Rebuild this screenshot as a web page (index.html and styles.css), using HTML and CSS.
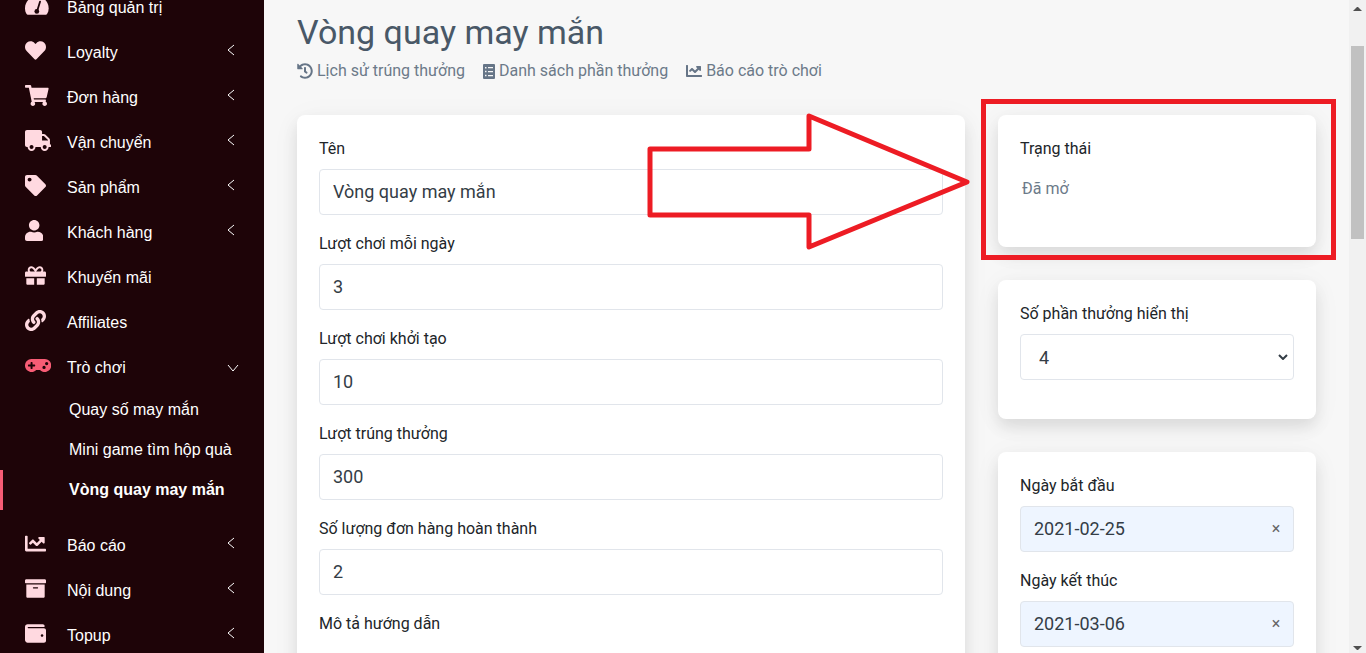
FILE: index.html
```html
<!DOCTYPE html>
<html lang="vi">
<head>
    <meta charset="UTF-8">
    <meta name="viewport" content="width=device-width, initial-scale=1.0">
    <title>Vòng quay may mắn</title>
    <link rel="stylesheet" href="styles.css">
</head>
<body>
    <nav class="sidebar">
        <ul class="menu">
            <li>
                <a href="#">
                    <svg class="icon" viewBox="0 0 576 512"><path d="M288 32C129 32 0 161 0 320c0 53 14 102 39 145 6 10 16 15 28 15h442c12 0 22-5 28-15 25-43 39-92 39-145 0-159-129-288-288-288z"/><path class="needle" d="M368 160L304 368"/><circle class="hub" cx="288" cy="400" r="58"/></svg>
                    <span>Bảng quản trị</span>
                </a>
            </li>
            <li>
                <a href="#">
                    <svg class="icon" viewBox="0 0 512 512"><path d="M462.3 62.6C407.5 15.9 326 24.3 275.7 76.2L256 96.5l-19.7-20.3C186.1 24.3 104.5 15.9 49.7 62.6c-62.8 53.6-66.1 149.8-9.9 207.9l193.5 199.8c12.5 12.9 32.8 12.9 45.3 0l193.5-199.8c56.3-58.1 53-154.3-9.8-207.9z"/></svg>
                    <span>Loyalty</span>
                    <svg class="arrow" viewBox="0 0 8 12"><path d="M7 1L1 6l6 5"/></svg>
                </a>
            </li>
            <li>
                <a href="#">
                    <svg class="icon" viewBox="0 0 576 512"><path d="M528.12 301.319l47.273-208C578.806 78.301 567.391 64 551.99 64H159.208l-9.166-44.81C147.758 8.021 137.93 0 126.529 0H24C10.745 0 0 10.745 0 24v16c0 13.255 10.745 24 24 24h69.883l70.248 343.435C147.325 417.1 136 435.222 136 456c0 30.928 25.072 56 56 56s56-25.072 56-56c0-15.674-6.447-29.835-16.824-40h209.647C430.447 426.165 424 440.326 424 456c0 30.928 25.072 56 56 56s56-25.072 56-56c0-22.172-12.888-41.332-31.579-50.405l5.517-24.276c3.413-15.018-8.002-29.319-23.403-29.319H218.117l-6.545-32h293.145c11.206 0 20.92-7.754 23.403-18.681z"/></svg>
                    <span>Đơn hàng</span>
                    <svg class="arrow" viewBox="0 0 8 12"><path d="M7 1L1 6l6 5"/></svg>
                </a>
            </li>
            <li>
                <a href="#">
                    <svg class="icon" viewBox="0 0 640 512"><path d="M624 352h-16V243.9c0-12.7-5.1-24.9-14.1-33.9L494 110.1c-9-9-21.2-14.1-33.9-14.1H416V48c0-26.5-21.5-48-48-48H48C21.5 0 0 21.5 0 48v320c0 26.5 21.5 48 48 48h16c0 53 43 96 96 96s96-43 96-96h128c0 53 43 96 96 96s96-43 96-96h48c8.8 0 16-7.2 16-16v-32c0-8.8-7.2-16-16-16zM160 464c-26.5 0-48-21.5-48-48s21.5-48 48-48 48 21.5 48 48-21.5 48-48 48zm320 0c-26.5 0-48-21.5-48-48s21.5-48 48-48 48 21.5 48 48-21.5 48-48 48zm80-208H416V144h44.1l99.9 99.9V256z"/></svg>
                    <span>Vận chuyển</span>
                    <svg class="arrow" viewBox="0 0 8 12"><path d="M7 1L1 6l6 5"/></svg>
                </a>
            </li>
            <li>
                <a href="#">
                    <svg class="icon" viewBox="0 0 512 512"><path d="M0 252.118V48C0 21.49 21.49 0 48 0h204.118a48 48 0 0 1 33.941 14.059l211.882 211.882c18.745 18.745 18.745 49.137 0 67.882L293.823 497.941c-18.745 18.745-49.137 18.745-67.882 0L14.059 286.059A48 48 0 0 1 0 252.118zM112 64c-26.51 0-48 21.49-48 48s21.49 48 48 48 48-21.49 48-48-21.49-48-48-48z"/></svg>
                    <span>Sản phẩm</span>
                    <svg class="arrow" viewBox="0 0 8 12"><path d="M7 1L1 6l6 5"/></svg>
                </a>
            </li>
            <li>
                <a href="#">
                    <svg class="icon" viewBox="0 0 448 512"><path d="M224 256c70.7 0 128-57.3 128-128S294.7 0 224 0 96 57.3 96 128s57.3 128 128 128zm89.6 32h-16.7c-22.2 10.2-46.9 16-72.9 16s-50.6-5.8-72.9-16h-16.7C60.2 288 0 348.2 0 422.4V464c0 26.5 21.5 48 48 48h352c26.5 0 48-21.5 48-48v-41.6c0-74.2-60.2-134.4-134.4-134.4z"/></svg>
                    <span>Khách hàng</span>
                    <svg class="arrow" viewBox="0 0 8 12"><path d="M7 1L1 6l6 5"/></svg>
                </a>
            </li>
            <li>
                <a href="#">
                    <svg class="icon" viewBox="0 0 512 512"><path d="M32 448c0 17.7 14.3 32 32 32h160V320H32v128zm256 32h160c17.7 0 32-14.3 32-32V320H288v160zm192-320h-42.1c6.2-12.1 10.1-25.5 10.1-40 0-48.5-39.5-88-88-88-41.6 0-68.5 21.3-103 68.3-34.5-47-61.4-68.3-103-68.3-48.5 0-88 39.5-88 88 0 14.5 3.8 27.9 10.1 40H32c-17.7 0-32 14.3-32 32v80c0 8.8 7.2 16 16 16h480c8.8 0 16-7.2 16-16v-80c0-17.7-14.3-32-32-32zm-326.1 0c-22.1 0-40-17.9-40-40s17.9-40 40-40c19.9 0 34.6 3.3 86.1 80h-86.1zm206.1 0h-86.1c51.4-76.5 65.7-80 86.1-80 22.1 0 40 17.9 40 40s-17.9 40-40 40z"/></svg>
                    <span>Khuyến mãi</span>
                </a>
            </li>
            <li>
                <a href="#">
                    <svg class="icon" viewBox="0 0 512 512"><path d="M326.612 185.391c59.747 59.809 58.927 155.698.36 214.59-.11.12-.24.25-.36.37l-67.2 67.2c-59.27 59.27-155.699 59.262-214.96 0-59.27-59.26-59.27-155.7 0-214.96l37.106-37.106c9.84-9.84 26.786-3.3 27.294 10.606.648 17.722 3.826 35.527 9.69 52.721 1.986 5.822.567 12.262-3.783 16.612l-13.087 13.087c-28.026 28.026-28.905 73.66-1.155 101.96 28.024 28.579 74.086 28.749 102.325.51l67.2-67.19c28.191-28.191 28.073-73.757 0-101.83-3.701-3.694-7.429-6.564-10.341-8.569a16.037 16.037 0 0 1-6.947-12.606c-.396-10.567 3.348-21.456 11.698-29.806l21.054-21.055c5.521-5.521 14.182-6.199 20.584-1.731a152.482 152.482 0 0 1 20.522 17.197zM467.547 44.449c-59.261-59.262-155.69-59.27-214.96 0l-67.2 67.2c-.12.12-.25.25-.36.37-58.566 58.892-59.387 154.781.36 214.59a152.454 152.454 0 0 0 20.521 17.196c6.402 4.468 15.064 3.789 20.584-1.731l21.054-21.055c8.35-8.35 12.094-19.239 11.698-29.806a16.037 16.037 0 0 0-6.947-12.606c-2.912-2.005-6.64-4.875-10.341-8.569-28.073-28.073-28.191-73.639 0-101.83l67.2-67.19c28.239-28.239 74.3-28.069 102.325.51 27.75 28.3 26.872 73.934-1.155 101.96l-13.087 13.087c-4.35 4.35-5.769 10.79-3.783 16.612 5.864 17.194 9.042 34.999 9.69 52.721.509 13.906 17.454 20.446 27.294 10.606l37.106-37.106c59.271-59.259 59.271-155.699.001-214.959z"/></svg>
                    <span>Affiliates</span>
                </a>
            </li>
            <li class="open">
                <a href="#">
                    <svg class="icon" viewBox="0 0 640 512"><path d="M480.07 96H160a160 160 0 1 0 114.24 272h91.5A160 160 0 1 0 480.07 96zM248 268a12 12 0 0 1-12 12h-52v52a12 12 0 0 1-12 12h-24a12 12 0 0 1-12-12v-52H84a12 12 0 0 1-12-12v-24a12 12 0 0 1 12-12h52v-52a12 12 0 0 1 12-12h24a12 12 0 0 1 12 12v52h52a12 12 0 0 1 12 12zm216 76a40 40 0 1 1 40-40 40 40 0 0 1-40 40zm64-96a40 40 0 1 1 40-40 40 40 0 0 1-40 40z"/></svg>
                    <span>Trò chơi</span>
                    <svg class="arrow down" viewBox="0 0 12 8"><path d="M1 1l5 6 5-6"/></svg>
                </a>
                <ul class="submenu">
                    <li><a href="#">Quay số may mắn</a></li>
                    <li><a href="#">Mini game tìm hộp quà</a></li>
                    <li class="active"><a href="#">Vòng quay may mắn</a></li>
                </ul>
            </li>
            <li>
                <a href="#">
                    <svg class="icon" viewBox="0 0 512 512"><path d="M496 384H64V80c0-8.84-7.16-16-16-16H16C7.16 64 0 71.16 0 80v336c0 17.67 14.33 32 32 32h464c8.84 0 16-7.16 16-16v-32c0-8.84-7.16-16-16-16zM464 96H345.94c-21.38 0-32.09 25.85-16.97 40.97l32.4 32.4L288 242.75l-73.37-73.37c-12.5-12.5-32.76-12.5-45.25 0l-68.69 68.69c-6.25 6.25-6.25 16.38 0 22.63l22.62 22.62c6.25 6.25 16.38 6.25 22.63 0L192 237.25l73.37 73.37c12.5 12.5 32.76 12.5 45.25 0l96-96 32.4 32.4c15.12 15.12 40.97 4.41 40.97-16.97V112c.01-8.84-7.15-16-15.99-16z"/></svg>
                    <span>Báo cáo</span>
                    <svg class="arrow" viewBox="0 0 8 12"><path d="M7 1L1 6l6 5"/></svg>
                </a>
            </li>
            <li>
                <a href="#">
                    <svg class="icon" viewBox="0 0 512 512"><path d="M32 448c0 17.7 14.3 32 32 32h384c17.7 0 32-14.3 32-32V160H32v288zm160-212c0-6.6 5.4-12 12-12h104c6.6 0 12 5.4 12 12v8c0 6.6-5.4 12-12 12H204c-6.6 0-12-5.4-12-12v-8zM480 32H32C14.3 32 0 46.3 0 64v48c0 8.8 7.2 16 16 16h480c8.8 0 16-7.2 16-16V64c0-17.7-14.3-32-32-32z"/></svg>
                    <span>Nội dung</span>
                    <svg class="arrow" viewBox="0 0 8 12"><path d="M7 1L1 6l6 5"/></svg>
                </a>
            </li>
            <li>
                <a href="#">
                    <svg class="icon" viewBox="0 0 512 512"><path d="M461.2 128H80c-8.84 0-16-7.16-16-16s7.16-16 16-16h384c8.84 0 16-7.16 16-16 0-26.51-21.49-48-48-48H64C28.65 32 0 60.65 0 96v320c0 35.35 28.65 64 64 64h397.2c28.02 0 50.8-21.53 50.8-48V176c0-26.47-22.78-48-50.8-48zM416 336c-17.67 0-32-14.33-32-32s14.33-32 32-32 32 14.33 32 32-14.33 32-32 32z"/></svg>
                    <span>Topup</span>
                    <svg class="arrow" viewBox="0 0 8 12"><path d="M7 1L1 6l6 5"/></svg>
                </a>
            </li>
        </ul>
    </nav>

    <main class="content">
        <h1>Vòng quay may mắn</h1>
        <div class="links">
            <a href="#">
                <svg viewBox="0 0 512 512"><path d="M504 255.531c.253 136.64-111.18 248.372-247.82 248.468-59.015.042-113.223-20.53-155.822-54.911-11.077-8.94-11.905-25.541-1.839-35.607l11.267-11.267c8.609-8.609 22.353-9.551 31.891-1.984C173.062 425.135 212.781 440 256 440c101.705 0 184-82.311 184-184 0-101.705-82.311-184-184-184-48.814 0-93.149 18.969-126.068 49.932l50.754 50.754c10.08 10.08 2.941 27.314-11.313 27.314H24c-8.837 0-16-7.163-16-16V38.627c0-14.254 17.234-21.393 27.314-11.314l49.372 49.372C129.209 34.136 189.552 8 256 8c136.81 0 247.747 110.78 248 247.531zm-180.912 78.784l9.823-12.63c8.138-10.463 6.253-25.542-4.21-33.679L288 256.349V152c0-13.255-10.745-24-24-24h-16c-13.255 0-24 10.745-24 24v135.651l65.409 50.874c10.463 8.137 25.541 6.253 33.679-4.21z"/></svg>
                Lịch sử trúng thưởng
            </a>
            <a href="#">
                <svg class="narrow" viewBox="0 0 12 15"><path fill-rule="evenodd" d="M1 0h10a1 1 0 0 1 1 1v13a1 1 0 0 1-1 1H1a1 1 0 0 1-1-1V1a1 1 0 0 1 1-1zM2 3v1.5h1.5V3zM5 3v1.2h5V3zM2 6.8v1.5h1.5V6.8zM5 7v1.2h5V7zM2 10.7v1.5h1.5v-1.5zM5 11v1.2h5V11z"/></svg>
                Danh sách phần thưởng
            </a>
            <a href="#">
                <svg viewBox="0 0 512 512"><path d="M496 384H64V80c0-8.84-7.16-16-16-16H16C7.16 64 0 71.16 0 80v336c0 17.67 14.33 32 32 32h464c8.84 0 16-7.16 16-16v-32c0-8.84-7.16-16-16-16zM464 96H345.94c-21.38 0-32.09 25.85-16.97 40.97l32.4 32.4L288 242.75l-73.37-73.37c-12.5-12.5-32.76-12.5-45.25 0l-68.69 68.69c-6.25 6.25-6.25 16.38 0 22.63l22.62 22.62c6.25 6.25 16.38 6.25 22.63 0L192 237.25l73.37 73.37c12.5 12.5 32.76 12.5 45.25 0l96-96 32.4 32.4c15.12 15.12 40.97 4.41 40.97-16.97V112c.01-8.84-7.15-16-15.99-16z"/></svg>
                Báo cáo trò chơi
            </a>
        </div>

        <div class="columns">
            <section class="card">
                <div class="field">
                    <label for="ten">Tên</label>
                    <input type="text" id="ten" value="Vòng quay may mắn">
                </div>
                <div class="field">
                    <label for="luot-ngay">Lượt chơi mỗi ngày</label>
                    <input type="text" id="luot-ngay" value="3">
                </div>
                <div class="field">
                    <label for="luot-khoi-tao">Lượt chơi khởi tạo</label>
                    <input type="text" id="luot-khoi-tao" value="10">
                </div>
                <div class="field">
                    <label for="luot-trung">Lượt trúng thưởng</label>
                    <input type="text" id="luot-trung" value="300">
                </div>
                <div class="field">
                    <label for="don-hang">Số lượng đơn hàng hoàn thành</label>
                    <input type="text" id="don-hang" value="2">
                </div>
                <div class="field">
                    <label for="mo-ta">Mô tả hướng dẫn</label>
                    <textarea id="mo-ta" rows="4"></textarea>
                </div>
                <svg class="pointer" viewBox="0 0 330 142"><path d="M5 39H164V6L322 72 164 137V105H5z"/></svg>
            </section>

            <div class="side">
                <section class="card marked">
                    <div class="field">
                        <h2>Trạng thái</h2>
                        <p class="state">Đã mở</p>
                    </div>
                </section>
                <section class="card">
                    <div class="field">
                        <label for="so-phan-thuong">Số phần thưởng hiển thị</label>
                        <div class="select-box">
                            <select id="so-phan-thuong">
                                <option>4</option>
                            </select>
                            <svg viewBox="0 0 10 6"><path d="M1 1l4 4 4-4"/></svg>
                        </div>
                    </div>
                </section>
                <section class="card">
                    <div class="field">
                        <label for="ngay-bat-dau">Ngày bắt đầu</label>
                        <div class="date">
                            <input type="text" id="ngay-bat-dau" value="2021-02-25">
                            <button type="button" aria-label="Xóa ngày bắt đầu">×</button>
                        </div>
                    </div>
                    <div class="field">
                        <label for="ngay-ket-thuc">Ngày kết thúc</label>
                        <div class="date">
                            <input type="text" id="ngay-ket-thuc" value="2021-03-06">
                            <button type="button" aria-label="Xóa ngày kết thúc">×</button>
                        </div>
                    </div>
                </section>
            </div>
        </div>
    </main>

    <div class="scrollbar">
        <svg viewBox="0 0 17 17"><path d="M8 7h1l4 4H4z"/></svg>
        <div class="thumb"></div>
        <svg viewBox="0 0 17 17"><path d="M4 10h9l-4 4H8z"/></svg>
    </div>
</body>
</html>
```
FILE: styles.css
```css
* {
    box-sizing: border-box;
}

body {
    margin: 0;
    height: 100vh;
    display: flex;
    overflow: hidden;
    background: #f7f7f7;
    color: #212529;
    font-family: Roboto, sans-serif;
    font-size: 16px;
    line-height: 24px;
}

a {
    color: inherit;
    text-decoration: none;
}

/* Sidebar */
.sidebar {
    flex: 0 0 264px;
    background: #1e0408;
    color: #fff;
    font-family: "Liberation Sans", Arial, sans-serif;
    overflow: hidden;
}

.menu,
.submenu {
    list-style: none;
    margin: 0;
    padding: 0;
}

.menu {
    margin-top: -15px;
}

.menu > li > a {
    display: grid;
    grid-template-columns: 42px 1fr 14px;
    align-items: center;
    height: 45px;
    padding: 0 23px 0 25px;
}

.icon {
    height: 21px;
    margin-bottom: 4px;
    fill: #ffd9e0;
}

.open .icon {
    fill: #f75c75;
}

.needle {
    stroke: #1e0408;
    stroke-width: 44;
    stroke-linecap: round;
}

.hub {
    fill: #1e0408;
}

.arrow {
    width: 8px;
    height: 12px;
    margin-bottom: 6px;
    fill: none;
    stroke: #fff;
}

.arrow.down {
    width: 12px;
    height: 8px;
    margin-bottom: 0;
}

.submenu {
    padding-bottom: 13px;
}

.submenu a {
    display: block;
    padding-left: 66px;
    border-left: 3px solid transparent;
    line-height: 40px;
}

.submenu .active a {
    border-left-color: #f75c75;
    font-weight: bold;
}

/* Content */
.content {
    flex: 1;
    min-width: 0;
    padding: 10px 33px;
}

h1 {
    margin: 0;
    color: #495867;
    font-size: 34px;
    font-weight: 400;
    line-height: 44px;
}

.links {
    display: flex;
    gap: 18px;
    margin: 5px 0 32px;
    color: #6c7a89;
}

.links a {
    display: flex;
    align-items: center;
    gap: 4px;
}

.links svg {
    width: 16px;
    height: 16px;
    fill: #667587;
}

.links .narrow {
    width: 12px;
    height: 15px;
}

.columns {
    display: grid;
    grid-template-columns: minmax(0, 1fr) 318px;
    gap: 33px;
}

.side {
    display: flex;
    flex-direction: column;
    gap: 33px;
}

.card {
    position: relative;
    padding: 22px;
    background: #fff;
    border-radius: 8px;
    box-shadow: 0 8px 16px rgba(0, 0, 0, 0.1), 0 4px 32px rgba(0, 0, 0, 0.04);
}

.field {
    margin-bottom: 17px;
}

label,
h2 {
    display: block;
    margin: 0 0 8px;
    font-size: 16px;
    font-weight: 400;
    line-height: 24px;
}

input,
select,
textarea {
    display: block;
    width: 100%;
    height: 46px;
    padding: 0 13px 2px;
    border: 1px solid #e1e5eb;
    border-radius: 4px;
    background: #fff;
    color: #343d46;
    font-family: inherit;
    font-size: 18px;
}

textarea {
    height: 120px;
    margin-top: 20px;
}

.state {
    margin: 0;
    padding: 0 2px;
    color: #6c7a89;
    line-height: 39px;
}

.select-box,
.date {
    position: relative;
}

select {
    appearance: none;
    padding: 0 18px;
}

.select-box svg {
    position: absolute;
    right: 6px;
    top: 20px;
    width: 10px;
    height: 6px;
    fill: none;
    stroke: #343d46;
    stroke-width: 2;
    pointer-events: none;
}

.date input {
    background: #eef5ff;
}

.date button {
    position: absolute;
    top: 11px;
    right: 8px;
    width: 20px;
    padding: 0;
    border: 0;
    background: none;
    color: #666;
    font: 16px/24px Roboto, sans-serif;
}

/* Red marks over the status card */
.marked::after {
    content: "";
    position: absolute;
    inset: -16px -20px -13px -17px;
    border: 5px solid #ed1c24;
}

.pointer {
    position: absolute;
    top: -5px;
    right: -10px;
    width: 330px;
    height: 142px;
    fill: none;
    stroke: #ed1c24;
    stroke-width: 5;
    stroke-linejoin: round;
    z-index: 1;
}

/* Scrollbar */
.scrollbar {
    flex: 0 0 17px;
    display: flex;
    flex-direction: column;
    background: #f1f1f1;
}

.scrollbar svg {
    width: 17px;
    height: 17px;
    fill: #505050;
}

.thumb {
    width: 13px;
    height: 193px;
    margin: 29px auto auto;
    background: #c1c1c1;
}
```
